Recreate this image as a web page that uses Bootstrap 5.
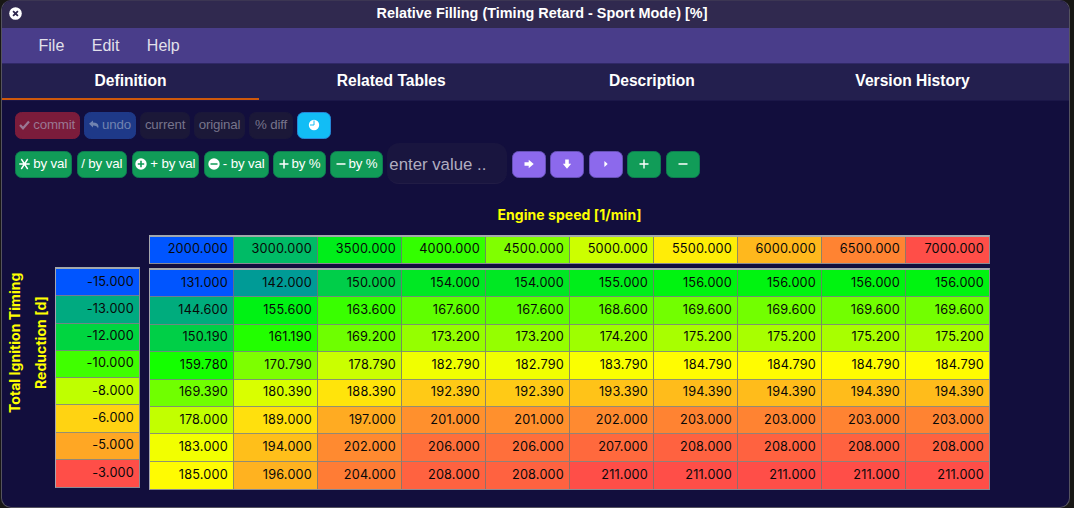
<!DOCTYPE html>
<html lang="en">
<head>
<meta charset="utf-8">
<title>Relative Filling (Timing Retard - Sport Mode) [%]</title>
<link href="https://cdn.jsdelivr.net/npm/bootstrap@5.3.0/dist/css/bootstrap.min.css" rel="stylesheet">
<style>
html,body{height:508px;overflow:hidden}
body{background:#181715;font-family:"Liberation Sans",Arial,sans-serif;line-height:1.2}
.window{width:1069px;height:508px;margin-left:1px;border:1px solid #55535f;border-top-color:#3c3653;border-radius:10px;background:#120e3d;overflow:hidden}
.titlebar{height:27px;background:#30294f;color:#fff;font:bold 14.4px "Liberation Sans",sans-serif;padding:0 0 3px 7px}
.titlebar span{padding-right:7px;letter-spacing:.02px}
.menubar{height:36px;background:#493d8a;border-bottom:1px solid #302867;color:#e2e0ea;font-size:16px;padding:0 0 0 36.5px;gap:27.5px}
.tabbar{height:37px;background:#231f4e;border-bottom:1px solid #1b1748;gap:3.7px}
.tabbar .nav-link{width:257px;padding:0;color:#fff;font-weight:bold;font-size:15.6px;border-bottom:2px solid transparent;border-radius:0}
.tabbar .nav-link.active{border-bottom-color:#cf580b}
.tools{padding:11px 0 0 12.5px;gap:4.5px}
.calc{padding:4px 0 0 12.5px;gap:4.5px}
.tools .btn,.calc .btn{height:27px;padding:0 0 1px;font-size:13.3px;border-radius:6.5px;display:flex;align-items:center;justify-content:center;gap:3px;white-space:nowrap;flex:none;line-height:1;letter-spacing:-.15px;color:#fff;border:1px solid #0d7c50;background:#119c58}
.calc .btn{margin-top:1px}
.tools .btn{color:#77748b;background:#1b1838;border-color:#1a173a;opacity:1}
.tools .red{background:#7b1c3b;border-color:#7b1c3b;color:#9a7793}
.tools .blu{background:#1e3988;border-color:#1e3988;color:#7183b0}
.tools .sky{background:#12bdf5;border-color:#2586d7;color:#fff}
.calc .pur{background:#8c69ec;border-color:#6651b5}
.w33{width:34px}.w43{width:43.5px}.w49{width:49.5px}.w50{width:50.5px}.w51{width:51.5px}.w53{width:52.5px}.w58{width:57.5px}.w65{width:65.3px}.w67{width:67.5px}
.entry{width:120px;height:41px;border:0;border-radius:12px;background:#19153f;color:#b0adc0;font-size:16.8px;padding:3px 2px 0;border-bottom:1px solid #211c45}
.entry:focus{background:#19153f;box-shadow:none}
.entry::placeholder{color:#b0adc0;opacity:1}
.x-title{width:841px;margin-left:147px;height:51px;padding-top:22px;text-align:center}
.axis-name{color:#ff0;font:bold 14px Inter,sans-serif;letter-spacing:.05px}
.y-title{width:53px;height:221px;margin-top:-3px;padding-right:0;writing-mode:vertical-rl;transform:rotate(180deg);text-align:center;line-height:26px}
.cells{display:grid;border:1px solid #8a8a94;border-top:2px solid #a3a8ac;border-left-color:#a5a6ae;font:12.7px Inter,sans-serif;letter-spacing:.2px;color:#080808;overflow:hidden}
.cells div{display:flex;align-items:center;justify-content:flex-end;padding:0 5px 2px 0;border-right:1px solid rgba(120,115,115,.8);border-bottom:1px solid rgba(130,130,130,.85)}
.cells .edge-r{border-right:0}
.cells .edge-b{border-bottom:0}
#xaxis{width:841px;height:29px;grid-template-columns:repeat(9,84px) 1fr}
#xaxis div{padding-bottom:3px}
#grid{width:841px;height:222px;grid-template-columns:repeat(9,84px) 1fr;grid-template-rows:repeat(8,1fr);margin-top:4px}
#yaxis{width:85px;height:221px;grid-template-rows:repeat(8,1fr);margin-right:9px;margin-top:32px}
svg{fill:currentColor;flex:none}
</style>
</head>
<body>
<div class="window">
  <header class="titlebar d-flex align-items-center">
    <svg width="13" height="13" viewBox="0 0 13 13"><circle cx="6.5" cy="6.5" r="6.3"/><path d="M4.1 4.1l4.800 4.800M8.900 4.100L4.100 8.900" stroke="#30294f" stroke-width="1.800"/></svg>
    <span class="flex-grow-1 text-center">Relative Filling (Timing Retard - Sport Mode) [%]</span>
  </header>
  <nav class="menubar d-flex align-items-center"><span>File</span><span>Edit</span><span>Help</span></nav>
  <ul class="nav tabbar flex-nowrap">
    <li class="nav-item d-flex"><a class="nav-link active d-flex align-items-center justify-content-center">Definition</a></li>
    <li class="nav-item d-flex"><a class="nav-link d-flex align-items-center justify-content-center">Related Tables</a></li>
    <li class="nav-item d-flex"><a class="nav-link d-flex align-items-center justify-content-center">Description</a></li>
    <li class="nav-item d-flex"><a class="nav-link d-flex align-items-center justify-content-center">Version History</a></li>
  </ul>
  <div class="tools d-flex">
    <button class="btn red w65" disabled><svg width="11" height="10" viewBox="0 0 11 10"><path d="M1 5l3 3.200L10 1.500" fill="none" stroke="currentColor" stroke-width="2.300"/></svg>commit</button>
    <button class="btn blu w51" disabled><svg width="10" height="10" viewBox="0 0 10 10"><path d="M0 3.800L4 .5v2c3.500 0 5.500 1.400 5.500 4L9 8.500C8.500 6.500 7 5.400 4 5.400v2z"/></svg>undo</button>
    <button class="btn w49" disabled>current</button>
    <button class="btn w50" disabled>original</button>
    <button class="btn w43" disabled>% diff</button>
    <button class="btn sky w33"><svg width="12" height="12" viewBox="0 0 12 12"><circle cx="6" cy="6" r="5.200"/><path d="M6 1.500v4.500H2" fill="none" stroke="#12bdf5" stroke-width="1"/></svg></button>
  </div>
  <div class="calc d-flex align-items-center">
    <button class="btn w58"><svg width="11" height="12" viewBox="0 0 11 12"><path d="M.3 6h10.400M2.300 1l6.400 10M8.700 1L2.300 11" fill="none" stroke="currentColor" stroke-width="1.400"/></svg>by val</button>
    <button class="btn w50">/ by val</button>
    <button class="btn w67"><svg width="12" height="12" viewBox="0 0 12 12"><circle cx="6" cy="6" r="5.700"/><path d="M2.800 6h6.400M6 2.800v6.400" stroke="#119c58" stroke-width="1.600"/></svg>+ by val</button>
    <button class="btn w65"><svg width="12" height="12" viewBox="0 0 12 12"><circle cx="6" cy="6" r="5.700"/><path d="M2.500 6h7" stroke="#119c58" stroke-width="1.400"/></svg>- by val</button>
    <button class="btn w53"><svg width="10" height="10" viewBox="0 0 10 10"><path d="M.5 5h9M5 .5v9" stroke="currentColor" stroke-width="1.500"/></svg>by %</button>
    <button class="btn w53"><svg width="10" height="10" viewBox="0 0 10 10"><path d="M.5 5h9" stroke="currentColor" stroke-width="1.500"/></svg>by %</button>
    <input class="form-control entry flex-shrink-0" placeholder="enter value ..">
    <button class="btn pur w33"><svg width="10" height="10" viewBox="0 0 10 10"><path d="M.5 3.200h4.200V.8L9.700 5 4.700 9.200V6.800H.5z"/></svg></button>
    <button class="btn pur w33"><svg width="10" height="10" viewBox="0 0 10 10"><path d="M3.200.5v4.200H.8L5 9.700l4.200-5H6.800V.5z"/></svg></button>
    <button class="btn pur w33"><svg width="4" height="6" viewBox="0 0 4 6"><path d="M.4 0v6L3.700 3z"/></svg></button>
    <button class="btn w33"><svg width="10" height="10" viewBox="0 0 10 10"><path d="M.5 5h9M5 .5v9" stroke="currentColor" stroke-width="1.400"/></svg></button>
    <button class="btn w33"><svg width="10" height="10" viewBox="0 0 10 10"><path d="M.5 5h9" stroke="currentColor" stroke-width="1.400"/></svg></button>
  </div>
  <div class="x-title axis-name">Engine speed [1/min]</div>
  <main class="d-flex align-items-start">
    <div class="y-title axis-name">Total Ignition Timing<br>Reduction [d]</div>
    <div id="yaxis" class="cells"></div>
    <div><div id="xaxis" class="cells"></div><div id="grid" class="cells"></div></div>
  </main>
</div>
<script>
// Heat scale: blue, green, yellow, red at equal thirds of the range.
const stops = [[0,85,255],[0,255,0],[255,255,0],[255,78,72]];
function heat(v, lo, hi) {
  const t = (v - lo) / (hi - lo) * 3, i = Math.min(2, Math.floor(t));
  return 'rgb(' + stops[i].map((c, k) => Math.round(c + (stops[i+1][k] - c) * (t - i))) + ')';
}
function fill(id, values, cols) {
  const lo = Math.min(...values), hi = Math.max(...values), n = values.length;
  document.getElementById(id).innerHTML = values.map((v, i) =>
    `<div class="${(i+1)%cols ? '' : 'edge-r'} ${i >= n-cols ? 'edge-b' : ''}" style="background-color:${heat(v, lo, hi)}">${v.toFixed(3)}</div>`).join('');
}
fill('xaxis', [2000,3000,3500,4000,4500,5000,5500,6000,6500,7000], 10);
fill('yaxis', [-15,-13,-12,-10,-8,-6,-5,-3], 1);
fill('grid', [
  131,142,150,154,154,155,156,156,156,156,
  144.6,155.6,163.6,167.6,167.6,168.6,169.6,169.6,169.6,169.6,
  150.19,161.19,169.2,173.2,173.2,174.2,175.2,175.2,175.2,175.2,
  159.78,170.79,178.79,182.79,182.79,183.79,184.79,184.79,184.79,184.79,
  169.39,180.39,188.39,192.39,192.39,193.39,194.39,194.39,194.39,194.39,
  178,189,197,201,201,202,203,203,203,203,
  183,194,202,206,206,207,208,208,208,208,
  185,196,204,208,208,211,211,211,211,211], 10);
</script>
<script src="https://cdn.jsdelivr.net/npm/bootstrap@5.3.0/dist/js/bootstrap.bundle.min.js"></script>
</body>
</html>
